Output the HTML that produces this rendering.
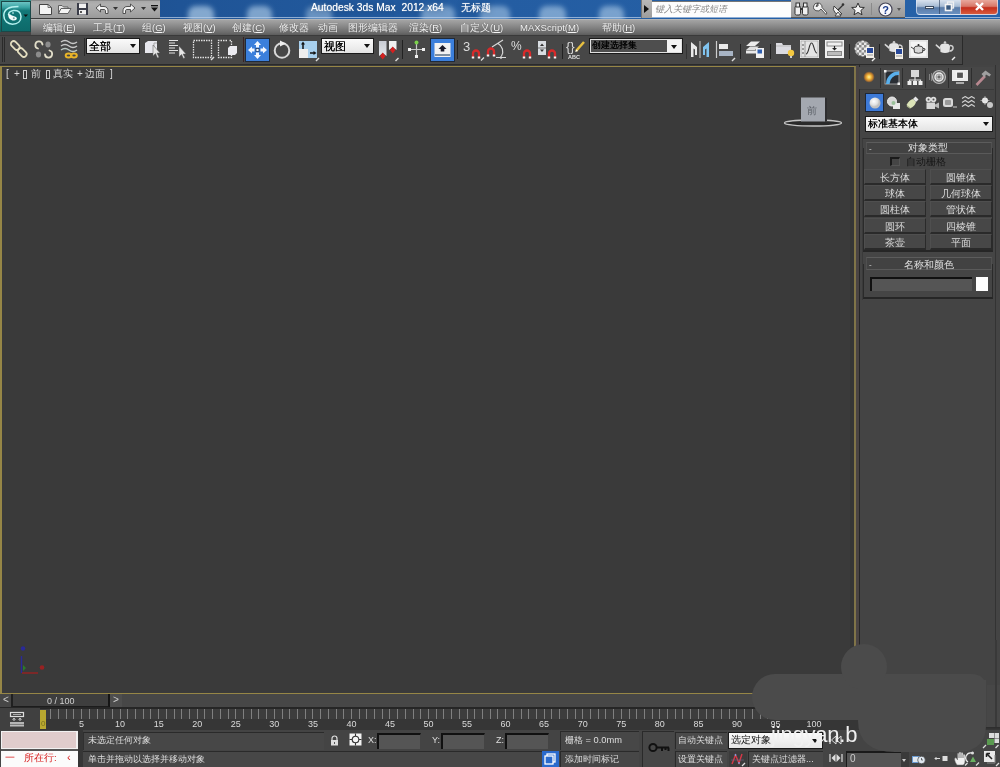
<!DOCTYPE html>
<html><head><meta charset="utf-8">
<style>
*{margin:0;padding:0;box-sizing:border-box}
html,body{width:1000px;height:767px;overflow:hidden;background:#444;font-family:"Liberation Sans",sans-serif;position:relative}
body{will-change:transform}
.a{position:absolute}
.t{position:absolute;white-space:nowrap;line-height:1}
#title{left:0;top:0;width:1000px;height:19px;overflow:hidden;background:linear-gradient(90deg,#1c4a86 0,#1f5496 18%,#245da2 50%,#2662a8 100%);}
.spot{position:absolute;top:6px;height:16px;background:rgba(200,225,245,.8);border-radius:8px 8px 2px 2px;filter:blur(2.5px)}
#qat{left:31px;top:0;width:129px;height:19px;background:linear-gradient(#a8a8a8,#b0b0b0 20%,#a4a4a4 70%,#9a9a9a);border-bottom:1.5px solid #3e3e3e;border-top:1px solid #8a8a8a}
#logo{left:0;top:0;width:31px;height:32px;background:linear-gradient(#3a9a94,#1a7672 60%,#0f6260);}
#menu{left:31px;top:19px;width:969px;height:16px;background:linear-gradient(#a4a4a4,#8a8a8a 40%,#6a6a6a 85%,#5c5c5c);border-top:1px solid #b4b4b4}
.mi{position:absolute;top:2px;font-size:9.5px;color:#f4f4f4;white-space:nowrap;line-height:11px;text-shadow:0 0 1px rgba(40,40,40,.6)}
.mi u{text-decoration-thickness:1px;text-underline-offset:1px}
#tb{left:0;top:35px;width:1000px;height:30px;background:#434343;}
#tbin{left:0;top:35px;width:963px;height:30px;background:#474747;border-top:1px solid #3a3a3a;border-right:1px solid #2a2a2a;border-bottom:1px solid #2a2a2a}
#vp{left:0;top:65px;width:857px;height:629px;background:#3a3a3a;}
#vpb{left:0;top:66px;width:856px;height:628px;border-left:2px solid #968646;border-top:1px solid #968646;border-right:2px solid #807448;border-bottom:1px solid #968646;}
#cp{left:857px;top:65px;width:143px;height:629px;background:#444;}
#ts{left:0;top:694px;width:1000px;height:14px;background:#4a4a4a;}
#trk{left:0;top:708px;width:1000px;height:22px;background:#444;}
#sb{left:0;top:730px;width:1000px;height:37px;background:#444;}
.dd{background:#1a1a1a;}
.dd:before{content:"";position:absolute;left:1px;top:1px;right:1px;bottom:1px;background:linear-gradient(#fafafa,#e4e4e4)}
.ddt{position:absolute;left:3px;top:2px;font-size:10.5px;color:#000;line-height:12px;white-space:nowrap;text-shadow:.3px 0 0 #000}
.arr{display:block;width:0;height:0;border-left:3.5px solid transparent;border-right:3.5px solid transparent;border-top:4px solid #111}
.dd .arr{position:absolute;right:4px;top:6px}
.vl{font-size:10px;color:#d8d8d8}
.sep{width:1px;height:20px;background:#2e2e2e}
.rl{font-size:9.5px;color:#e0e0e0}
.btn{background:#474747;border-top:1px solid #4f4f4f;border-left:1px solid #4f4f4f;border-right:1px solid #2a2a2a;border-bottom:2px solid #2a2a2a}
.btn span{position:absolute;left:0;right:0;top:2px;text-align:center;font-size:9.5px;color:#dcdcdc;line-height:11px}
.tk{top:709px;width:1px;height:10px;background:#808080}
.tl{top:720px;font-size:9px;color:#dadada}
.sbt{font-size:9.3px;color:#dedede}
.fld{background:#555;border-top:2px solid #111;border-left:2px solid #111;border-right:1px solid #444}
.kb{background:#4a4a4a;border-top:1px solid #2a2a2a;border-left:1px solid #2a2a2a}
</style></head><body>
<div id="title" class="a"><div class="spot" style="left:188px;width:26px;opacity:0.75"></div><div class="spot" style="left:247px;width:25px;opacity:0.7"></div><div class="spot" style="left:306px;width:26px;opacity:0.55"></div><div class="spot" style="left:421px;width:34px;opacity:0.6"></div><div class="spot" style="left:480px;width:30px;opacity:0.6"></div><div class="spot" style="left:539px;width:27px;opacity:0.65"></div><div class="spot" style="left:599px;width:25px;opacity:0.65"></div><div class="a" style="left:0;top:17px;width:1000px;height:1px;background:rgba(190,210,235,.7)"></div></div>
<div class="t" style="left:311px;top:3px;font-size:10.3px;color:#fff;text-shadow:0 0 1px rgba(255,255,255,.7),0 0 5px rgba(20,40,70,.5)">Autodesk 3ds Max&nbsp; 2012 x64</div>
<div class="t" style="left:461px;top:3px;font-size:10px;color:#fff;text-shadow:0 0 1px rgba(255,255,255,.7),0 0 5px rgba(20,40,70,.5)">无标题</div>
<div id="qat" class="a"></div>
<!-- search & info center -->
<div class="a" style="left:641px;top:0;width:11px;height:18px;background:linear-gradient(#b8b8b8,#9c9c9c);border-left:1px solid #777"></div>
<svg class="a" style="left:644px;top:5px" width="5" height="8"><path d="M0 0 L5 4 L0 8Z" fill="#111"/></svg>
<div class="a" style="left:652px;top:1px;width:139px;height:16px;background:#fdfdfd;border-top:1px solid #777"></div>
<div class="t" style="left:655px;top:5px;font-size:9px;color:#8a8a8a;font-style:italic">键入关键字或短语</div>
<div class="a" style="left:791px;top:0;width:114px;height:18px;background:linear-gradient(#b4b4b4,#a4a4a4 60%,#9a9a9a);border-bottom:1px solid #555"></div>
<svg class="a" style="left:794px;top:2px" width="15" height="14"><g fill="#f0f0f0" stroke="#333" stroke-width="1"><rect x="1" y="4" width="5.5" height="9" rx="1.5"/><rect x="8.5" y="4" width="5.5" height="9" rx="1.5"/><rect x="2" y="1" width="3.5" height="4"/><rect x="9.5" y="1" width="3.5" height="4"/></g><rect x="6" y="6" width="3" height="2" fill="#333"/></svg>
<svg class="a" style="left:813px;top:2px" width="15" height="15"><path d="M5 1 A4 4 0 1 0 8 7 L13 12.5 L14 11 L9 5.5 A4 4 0 0 0 5 1 L5 4 L3 4.5 Z" fill="#f4f4f4" stroke="#444" stroke-width=".9"/></svg>
<svg class="a" style="left:832px;top:2px" width="14" height="15"><path d="M2 4 A6 6 0 0 0 10 12 Z" fill="#f0f0f0" stroke="#333" stroke-width=".9"/><path d="M6 8 L11 3" stroke="#333" stroke-width="1.2"/><circle cx="11" cy="2.5" r="1.3" fill="#333"/><path d="M3 14 L6 10 L9 14Z" fill="#f0f0f0" stroke="#333" stroke-width=".8"/></svg>
<svg class="a" style="left:851px;top:2px" width="14" height="14"><path d="M7 1 L8.8 5.2 L13.3 5.5 L9.9 8.4 L11 12.8 L7 10.4 L3 12.8 L4.1 8.4 L0.7 5.5 L5.2 5.2Z" fill="#f4f4f4" stroke="#333" stroke-width="1"/></svg>
<div class="a" style="left:871px;top:3px;width:1px;height:12px;background:#8a8a8a"></div>
<svg class="a" style="left:878px;top:2px" width="15" height="15"><circle cx="7.5" cy="7.5" r="6.5" fill="#f8f8fc" stroke="#445" stroke-width="1.2"/><text x="4.2" y="11.8" font-size="11" font-weight="bold" fill="#1a3a8a" font-family="Liberation Sans">?</text></svg>
<svg class="a" style="left:897px;top:8px" width="4" height="3"><path d="M0 0 H4 L2 3Z" fill="#555"/></svg>
<!-- window buttons -->
<div class="a" style="left:916px;top:0;width:82px;height:15px;border:1px solid rgba(220,230,245,.7);border-top:0;border-radius:0 0 4px 4px;background:linear-gradient(#d8e2ee,#a8bcd4 45%,#5a7ca8 55%,#6a90c0)"></div>
<div class="a" style="left:960px;top:0;width:38px;height:15px;border:1px solid rgba(220,230,245,.7);border-top:0;border-radius:0 0 4px 0;background:linear-gradient(#e8a89c,#d87868 45%,#c42e1c 55%,#d85a3c)"></div>
<div class="a" style="left:939px;top:0;width:1px;height:14px;background:rgba(40,60,90,.6)"></div>
<div class="a" style="left:925px;top:6px;width:9px;height:3px;background:#f4f4f4;border:1px solid #3a4a60"></div>
<svg class="a" style="left:944px;top:1px" width="11" height="11"><rect x="3.5" y="1" width="6" height="6" fill="none" stroke="#f0f0f0" stroke-width="1.3"/><rect x="1.5" y="3.5" width="6" height="6" fill="#3a5a80" stroke="#f4f4f4" stroke-width="1.6"/></svg>
<svg class="a" style="left:974px;top:1px" width="11" height="11"><path d="M2 2 L9 9 M9 2 L2 9" stroke="#fff" stroke-width="2.4"/></svg>

<div id="logo" class="a"></div>
<div class="a" style="left:1px;top:1px;width:30px;height:31px;background:linear-gradient(#6cc4c4 0,#3aa4a4 18%,#127878 30%,#0d6a6a 100%);border:1px solid #1a4848"></div>
<svg class="a" style="left:2px;top:4px" width="28" height="24"><path d="M16.5 2.5 C9 2.5 1.8 4.5 1.8 11.5 C1.8 17 6 20.2 10.5 20.2 C16 20.2 19 17 19 12.5 C19 8 15.5 6 11.5 6.5 C8 7 6.5 9 6.5 11" fill="none" stroke="#b4f0ee" stroke-width="1.5"/><path d="M6.2 10 C5.8 14.5 9 16.8 12.2 16.5 C15 16.2 15.8 14 13.5 12.8 C11.5 11.8 9.5 12 8.5 10.5Z" fill="#f4fafa"/><circle cx="11.8" cy="14.2" r="1" fill="#7aa8a8"/><circle cx="11" cy="9" r="1.1" fill="#8ccaca"/><path d="M21.5 10.5 H26 L23.75 13Z" fill="#111"/></svg>
<!-- QAT icons -->
<svg class="a" style="left:38px;top:3px" width="15" height="13"><path d="M1.5 1.5 H10 L13.5 4.5 V11.5 H1.5Z" fill="#f4f4f4" stroke="#444" stroke-width="1"/><path d="M10 1.5 V4.5 H13.5" fill="none" stroke="#555" stroke-width=".8"/></svg>
<svg class="a" style="left:57px;top:3px" width="15" height="12"><path d="M1.5 2.5 H5 L6.5 4 H11 V6 H4 L1.5 10.5Z" fill="#e8e8e8" stroke="#555" stroke-width=".9"/><path d="M1.5 10.5 L4 5.5 H14 L11 10.5Z" fill="#f4f4f4" stroke="#555" stroke-width=".9"/></svg>
<svg class="a" style="left:76px;top:2px" width="13" height="14"><rect x="1" y="1" width="11" height="12" fill="#3a3c48"/><rect x="3" y="1.5" width="7" height="4.5" fill="#f0f0f0"/><rect x="3" y="8" width="7" height="4.5" fill="#f0f0f0"/><rect x="4" y="9" width="2" height="2" fill="#555"/></svg>
<svg class="a" style="left:95px;top:3px" width="14" height="12"><path d="M1 5 L5.5 1 V3.5 H9 C12 3.5 13 6 13 8 V10.5 H10.5 V8 C10.5 7 10 6.5 9 6.5 H5.5 V9Z" fill="#f4f4f4" stroke="#444" stroke-width=".9"/></svg>
<svg class="a" style="left:113px;top:7px" width="5" height="3"><path d="M0 0 H5 L2.5 3Z" fill="#333"/></svg>
<svg class="a" style="left:122px;top:3px" width="14" height="12"><path d="M13 5 L8.5 1 V3.5 H5 C2 3.5 1 6 1 8 V10.5 H3.5 V8 C3.5 7 4 6.5 5 6.5 H8.5 V9Z" fill="#f4f4f4" stroke="#444" stroke-width=".9"/></svg>
<svg class="a" style="left:141px;top:7px" width="5" height="3"><path d="M0 0 H5 L2.5 3Z" fill="#333"/></svg>
<svg class="a" style="left:151px;top:5px" width="7" height="7"><rect x="0" y="0" width="7" height="1.3" fill="#111"/><path d="M0 2.5 H7 L3.5 6.5Z" fill="#111"/></svg>

<div id="menu" class="a">
<span class="mi" style="left:12px">编辑(<u>E</u>)</span>
<span class="mi" style="left:62px">工具(<u>T</u>)</span>
<span class="mi" style="left:111px">组(<u>G</u>)</span>
<span class="mi" style="left:152px">视图(<u>V</u>)</span>
<span class="mi" style="left:201px">创建(<u>C</u>)</span>
<span class="mi" style="left:248px">修改器</span>
<span class="mi" style="left:287px">动画</span>
<span class="mi" style="left:317px">图形编辑器</span>
<span class="mi" style="left:378px">渲染(<u>R</u>)</span>
<span class="mi" style="left:429px">自定义(<u>U</u>)</span>
<span class="mi" style="left:489px">MAXScript(<u>M</u>)</span>
<span class="mi" style="left:571px">帮助(<u>H</u>)</span>
</div>
<div id="tb" class="a"></div>
<div id="tbin" class="a"></div>

<!-- TOOLBAR -->
<div class="a" style="left:2px;top:37px;width:1px;height:25px;background:#2a2a2a"></div>
<div class="a" style="left:4px;top:37px;width:1px;height:25px;background:#2a2a2a"></div>
<svg class="a" style="left:9px;top:39px" width="20" height="21"><g fill="none" stroke="#e4dec0" stroke-width="1.8"><rect x="3.5" y="1.5" width="5.5" height="10" rx="2.75" transform="rotate(-45 6.25 6.5)"/><rect x="10.5" y="8.5" width="5.5" height="10" rx="2.75" transform="rotate(-45 13.25 13.5)"/></g></svg>
<svg class="a" style="left:32px;top:38px" width="24" height="22"><ellipse cx="16" cy="6.5" rx="2.6" ry="3" fill="#8c8c8c"/><ellipse cx="6.5" cy="16.5" rx="2.6" ry="3" fill="#8c8c8c"/><g fill="none" stroke="#e0dcc8" stroke-width="1.8" stroke-linecap="round"><path d="M6 10.5 A3.6 3.6 0 1 1 10.5 6.5"/><path d="M13 16.5 A3.6 3.6 0 1 0 17.5 12.5"/></g></svg>
<svg class="a" style="left:59px;top:39px" width="22" height="21"><g fill="none" stroke="#c8c8c8" stroke-width="1.5"><path d="M2 3 Q6 0 10 3 Q14 6 18 3"/><path d="M2 7 Q6 4 10 7 Q14 10 18 7"/><path d="M2 11 Q6 8 10 11 Q14 14 18 11" stroke="#bcc8c4"/></g><g fill="none" stroke="#e8b428" stroke-width="2"><ellipse cx="9.5" cy="16.5" rx="2.8" ry="2"/><ellipse cx="15" cy="16.5" rx="2.8" ry="2"/></g></svg>
<div class="a" style="left:84px;top:38px;width:1px;height:18px;background:#2a2a2a"></div>
<div class="a dd" style="left:86px;top:38px;width:54px;height:16px"><span class="ddt">全部</span><i class="arr"></i></div>
<svg class="a" style="left:144px;top:40px" width="18" height="19"><path d="M1 3 L4 1 H13 V11 L10 13 H1Z" fill="#e8e8ee"/><path d="M10 3 H13 M10 3 V13" stroke="#aaa" fill="none"/><path d="M9 5 V16 L11.5 13.5 L13.5 18 L15 17.3 L13 13 H16Z" fill="#e6e6e6" stroke="#555" stroke-width=".5"/></svg>
<svg class="a" style="left:167px;top:39px" width="21" height="20"><g stroke="#e4e4e4" stroke-width="1.1"><path d="M2 1.5 H11 M2 4 H8 M2 6.5 H11 M2 9 H8 M2 11.5 H11 M2 14 H8"/></g><path d="M12 7 V18 L14.5 15.5 L16.5 19.5 L18 18.8 L16 15 H19Z" fill="#e6e6e6" stroke="#555" stroke-width=".5"/></svg>
<svg class="a" style="left:192px;top:39px" width="23" height="22"><rect x="1.5" y="1.5" width="18" height="17" fill="none" stroke="#e0e0e0" stroke-width="1.3" stroke-dasharray="1.5 1"/><path d="M19 21 L22 18" stroke="#ddd" stroke-width="1.5"/></svg>
<svg class="a" style="left:217px;top:39px" width="21" height="21"><path d="M10 1.5 H1.5 V18.5 H14.5 V14 M14.5 6 V1.5 H12" fill="none" stroke="#e0e0e0" stroke-width="1.3" stroke-dasharray="1.5 1"/><path d="M11 9 L13 7 H20 V14 L18 16 H11Z" fill="#eaeaf0"/></svg>
<div class="a" style="left:243px;top:37px;width:1px;height:25px;background:#3a2222"></div>
<div class="a" style="left:245px;top:38px;width:25px;height:24px;background:#1f2a3a"></div>
<svg class="a" style="left:246px;top:39px" width="23" height="22"><rect width="23" height="22" fill="#3b7fdc"/><g fill="#f4f8ff"><path d="M11.5 2 L15 6 H13 V8.5 H10 V6 H8Z"/><path d="M11.5 20 L15 16 H13 V13.5 H10 V16 H8Z"/><path d="M2 11 L6 7.5 V9.5 H8.5 V12.5 H6 V14.5Z"/><path d="M21 11 L17 7.5 V9.5 H14.5 V12.5 H17 V14.5Z"/></g><rect x="10" y="9.5" width="3" height="3" fill="#f4f8ff" stroke="#1a3a6a" stroke-width=".8"/></svg>
<svg class="a" style="left:272px;top:40px" width="21" height="20"><circle cx="10" cy="10.5" r="7.3" fill="none" stroke="#d8d8d8" stroke-width="2"/><path d="M8 0.5 L14 3.5 L8 6.5Z" fill="#f0f0f0"/></svg>
<svg class="a" style="left:298px;top:40px" width="22" height="22"><rect x="1" y="1" width="18" height="17" fill="#a8d0ee"/><rect x="1" y="9" width="9" height="9" fill="#eeeeee"/><path d="M5 9 V3" stroke="#111" stroke-width="1.5"/><path d="M3 4.5 L5 1.5 L7 4.5Z" fill="#111"/><path d="M12 13 H17" stroke="#111" stroke-width="1.5"/><path d="M15.5 11 L18.5 13 L15.5 15Z" fill="#111"/><path d="M18 21 L21 18" stroke="#ddd" stroke-width="1.5"/></svg>
<div class="a dd" style="left:321px;top:38px;width:53px;height:16px"><span class="ddt">视图</span><i class="arr"></i></div>
<svg class="a" style="left:378px;top:40px" width="22" height="22"><defs><linearGradient id="pg1" x1="0" x2="0" y1="0" y2="1"><stop offset="0" stop-color="#c8ccd4"/><stop offset="1" stop-color="#e4e8ec"/></linearGradient></defs><path d="M1 1 H8.5 V16 L4.75 13 L1 16Z" fill="url(#pg1)"/><path d="M4.75 12.5 L7.5 16 L4.75 19.5 L2 16Z" fill="#d42020"/><path d="M11 1 H18.5 V10 L14.75 7 L11 10Z" fill="#f0f0f0"/><path d="M14.75 6.5 L17.5 10 L14.75 13.5 L12 10Z" fill="#d42020"/><path d="M17.5 21 L20.5 18" stroke="#ddd" stroke-width="1.5"/></svg>
<div class="a" style="left:402px;top:40px;width:1px;height:19px;background:#222"></div>
<svg class="a" style="left:407px;top:40px" width="19" height="19"><path d="M9.5 3 V16 M2 9.5 H17" stroke="#c8c8c8" stroke-width="1.2"/><circle cx="9.5" cy="2.5" r="2" fill="#7ad04a"/><rect x="1" y="8" width="3" height="3" fill="#f0f0f0"/><rect x="15" y="8" width="3" height="3" fill="#f0f0f0"/><rect x="8" y="15" width="3" height="3" fill="#f0f0f0"/></svg>
<div class="a" style="left:430px;top:38px;width:25px;height:24px;background:#1f2a3a"></div>
<svg class="a" style="left:431px;top:39px" width="23" height="22"><rect width="23" height="22" fill="#3b7fdc"/><rect x="3.5" y="4" width="16" height="14" fill="#f2f2f2"/><rect x="4" y="15" width="15" height="2" fill="#8090a0"/><path d="M11.5 6 L15.5 10 H13.3 V12.5 H9.7 V10 H7.5Z" fill="#1a1a2a"/></svg>
<div class="a" style="left:457px;top:40px;width:1px;height:19px;background:#222"></div>
<div class="t" style="left:463px;top:40px;font-size:13px;color:#dcdcdc">3</div>
<svg class="a mg" style="left:471px;top:47px" width="14" height="14"><path d="M2 11 V6.5 a3 3 0 0 1 6 0 V11" fill="none" stroke="#d82a2a" stroke-width="2.3"/><path d="M0.8 9.5 H3.2 V11.5 H0.8Z M6.8 9.5 H9.2 V11.5 H6.8Z" fill="#f4f4f4"/><path d="M10 13.5 L13 10.5" stroke="#ddd" stroke-width="1.3"/></svg>
<svg class="a" style="left:486px;top:39px" width="22" height="21"><path d="M2 17 V12.5 a3 3 0 0 1 6 0 V17" fill="none" stroke="#d82a2a" stroke-width="2.3"/><path d="M0.8 15.5 H3.2 V17.5 H0.8Z M6.8 15.5 H9.2 V17.5 H6.8Z" fill="#f4f4f4"/><path d="M6 8 L17 1 M12 4.5 a9 9 0 0 1 3.5 12.5 M10 18.5 H20 M15 17 V20" fill="none" stroke="#d8d8d8" stroke-width="1.2"/></svg>
<div class="t" style="left:511px;top:40px;font-size:12px;color:#dcdcdc">%</div>
<svg class="a" style="left:522px;top:47px" width="11" height="13"><path d="M2 11 V6.5 a3 3 0 0 1 6 0 V11" fill="none" stroke="#d82a2a" stroke-width="2.3"/><path d="M0.8 9.5 H3.2 V11.5 H0.8Z M6.8 9.5 H9.2 V11.5 H6.8Z" fill="#f4f4f4"/></svg>
<svg class="a" style="left:537px;top:40px" width="20" height="20"><rect x="1" y="1" width="8" height="14" fill="#d8dde2"/><path d="M3 6 L5 3.5 L7 6Z M3 9.5 L5 12 L7 9.5Z" fill="#333"/><path d="M1 8 H9" stroke="#777"/><path d="M12 18 V13.5 a3 3 0 0 1 6 0 V18" fill="none" stroke="#d82a2a" stroke-width="2.3"/><path d="M10.8 16.5 H13.2 V18.5 H10.8Z M16.8 16.5 H19.2 V18.5 H16.8Z" fill="#f4f4f4"/></svg>
<div class="a" style="left:562px;top:44px;width:1px;height:15px;background:#222"></div>
<svg class="a" style="left:566px;top:39px" width="22" height="21"><text x="0" y="12" font-size="13" fill="#d8d8d8" font-family="Liberation Sans">{}</text><path d="M10 12 L18 3" stroke="#e8c040" stroke-width="2.5"/><path d="M9 13 L10.5 10.5 L12 12Z" fill="#fff"/><text x="2" y="19.5" font-size="5.5" font-weight="bold" fill="#e0e0e0" font-family="Liberation Sans">ABC</text></svg>
<div class="a" style="left:589px;top:38px;width:94px;height:16px;background:#1a1a1a"></div>
<div class="a" style="left:590px;top:39px;width:92px;height:14px;border:1px solid #e0e0e0;background:#4e4e4e"></div>
<div class="t" style="left:592px;top:41px;font-size:9.3px;color:#000;text-shadow:.4px 0 0 #000">创建选择集</div>
<div class="a" style="left:667px;top:40px;width:14px;height:12px;background:#f4f4f4"></div>
<i class="arr a" style="left:671px;top:45px"></i>
<div class="a" style="left:686px;top:44px;width:1px;height:15px;background:#333"></div>
<svg class="a" style="left:690px;top:40px" width="20" height="19"><path d="M1 2 L7 7 V15 H5 V9.5 L3.5 8.5 V17 H1Z" fill="#eaeaea"/><path d="M10 1 V18" stroke="#c8c8c8" stroke-width="1"/><path d="M19 2 L13 7 V15 H15 V9.5 L16.5 8.5 V17 H19Z" fill="#80c4f0"/></svg>
<svg class="a" style="left:715px;top:40px" width="22" height="22"><path d="M1.5 1 V18" stroke="#ccc" stroke-width="1.2"/><rect x="4" y="4" width="9" height="5" fill="#eaeaea"/><rect x="4" y="11" width="14" height="5" fill="#a8b4c4"/><path d="M17 21 L20 18" stroke="#ddd" stroke-width="1.5"/></svg>
<div class="a" style="left:740px;top:44px;width:1px;height:15px;background:#222"></div>
<svg class="a" style="left:745px;top:40px" width="20" height="19"><path d="M1 6 L6 1.5 H15 L10 6Z" fill="#ececec"/><path d="M1 10 L5 6.5 H14 L10 10Z" fill="#e0e0e0"/><path d="M1 13.5 H11 V10.5 H1Z" fill="#e8e8e8"/><rect x="11" y="8" width="8" height="10" fill="#f0f0f0"/><rect x="12.5" y="9.5" width="4.5" height="4" fill="#2f5fb0"/></svg>
<div class="a" style="left:770px;top:44px;width:1px;height:15px;background:#222"></div>
<svg class="a" style="left:775px;top:40px" width="21" height="19"><path d="M1 3 H7 L8 5 H16 V14 H1Z" fill="#dcdce2"/><path d="M1 6 H16" stroke="#bbb"/><circle cx="16" cy="13" r="3.2" fill="#f4c840"/><rect x="15" y="16" width="2" height="2" fill="#ccc"/></svg>
<svg class="a" style="left:800px;top:40px" width="19" height="18"><rect x="0" y="0" width="19" height="18" fill="#f0f0f0"/><rect x="1" y="1" width="17" height="16" fill="#e4e4e4" stroke="#999" stroke-width=".6"/><path d="M5 1 V17" stroke="#888" stroke-width=".8"/><path d="M2 5 H4 M2 9 H4 M2 13 H4" stroke="#555"/><path d="M6 14 C9 14 9 3 11.5 3 C14 3 14 13 17 13" fill="none" stroke="#333" stroke-width="1.1"/></svg>
<svg class="a" style="left:825px;top:40px" width="19" height="18"><rect x="0" y="0" width="19" height="18" fill="#f0f0f0"/><rect x="2" y="2" width="15" height="4" fill="none" stroke="#888"/><rect x="2" y="11" width="15" height="5" fill="#888"/><rect x="3" y="12" width="13" height="3" fill="#bbb"/><path d="M9.5 6 V9" stroke="#222" stroke-width="1.2"/><path d="M7 8 L9.5 10.5 L12 8Z" fill="#222"/></svg>
<div class="a" style="left:849px;top:44px;width:1px;height:15px;background:#222"></div>
<svg class="a" style="left:854px;top:40px" width="22" height="22"><defs><pattern id="chk" width="5" height="5" patternUnits="userSpaceOnUse"><rect width="5" height="5" fill="#e8e8e8"/><rect width="2.5" height="2.5" fill="#8a8a8a"/><rect x="2.5" y="2.5" width="2.5" height="2.5" fill="#8a8a8a"/></pattern></defs><circle cx="8.5" cy="8.5" r="8" fill="url(#chk)"/><rect x="12" y="7" width="8" height="11" fill="#f4f0e8"/><rect x="13" y="8" width="6" height="5" fill="#2a4a9a"/><path d="M13 15 H19" stroke="#999"/><path d="M18 21 L21 18" stroke="#eee" stroke-width="1.5"/></svg>
<div class="a" style="left:879px;top:44px;width:1px;height:15px;background:#222"></div>
<svg class="a" style="left:883px;top:40px" width="21" height="20"><path d="M6 6 Q6 3 11 3 Q16 3 16 6 L15.5 11 Q11 13 6.5 11Z" fill="#e4e4e4"/><path d="M6.5 7 L2 3.5 L1.5 5 L6 9" fill="#d8d8d8"/><path d="M16 5 Q19.5 5 19 8 Q18.5 10.5 15.5 10.5" fill="none" stroke="#d0d0d0" stroke-width="1.5"/><circle cx="11" cy="2.2" r="1.3" fill="#ccc"/><rect x="12" y="8" width="8" height="11" fill="#f4f0e8"/><rect x="13" y="9" width="6" height="5" fill="#2a4a9a"/><path d="M13 16 H19" stroke="#999"/></svg>
<svg class="a" style="left:909px;top:40px" width="19" height="18"><rect width="19" height="18" fill="#ececec"/><rect x="1" y="1" width="17" height="16" fill="#f4f4f4" stroke="#c8c8c8" stroke-width=".6"/><path d="M5 8 Q5 6 9.5 6 Q14 6 14 8 L13.5 12.5 Q9.5 14 5.5 12.5Z" fill="#d8d8d8" stroke="#333" stroke-width=".9"/><path d="M5 9 L2 7 M14 8.5 Q16.5 8 16 10 L13.5 11" fill="none" stroke="#333" stroke-width=".9"/><circle cx="9.5" cy="5" r="1" fill="#222"/></svg>
<svg class="a" style="left:934px;top:40px" width="22" height="21"><path d="M6 6.5 Q6 3.5 11 3.5 Q16 3.5 16 6.5 L15.5 12 Q11 14 6.5 12Z" fill="#e4e4e4"/><path d="M6.5 7.5 L2 4 L1.5 5.5 L6 9.5" fill="#d8d8d8"/><path d="M16 5.5 Q19.5 5.5 19 8.5 Q18.5 11 15.5 11" fill="none" stroke="#d0d0d0" stroke-width="1.5"/><circle cx="11" cy="2.5" r="1.3" fill="#ccc"/><path d="M18 20 L21 17" stroke="#eee" stroke-width="1.5"/></svg>
<div id="vp" class="a"></div>
<div id="vpb" class="a"></div>
<!-- VIEWPORT CONTENT -->
<div class="t vl" style="left:6px;top:69px">[</div>
<div class="t vl" style="left:14px;top:69px">+</div>
<div class="a" style="left:23px;top:70px;width:4px;height:9px;border:1px solid #d0d0d0"></div>
<div class="t vl" style="left:31px;top:69px;font-size:10px">前</div>
<div class="a" style="left:46px;top:70px;width:4px;height:9px;border:1px solid #d0d0d0"></div>
<div class="t vl" style="left:53px;top:69px;font-size:10px">真实</div>
<div class="t vl" style="left:77px;top:69px">+</div>
<div class="t vl" style="left:85px;top:69px;font-size:10px">边面</div>
<div class="t vl" style="left:110px;top:69px">]</div>
<!-- viewcube -->
<svg class="a" style="left:782px;top:95px" width="64" height="34"><ellipse cx="31" cy="28" rx="28.5" ry="3" fill="#2a2a2a" stroke="#c4c4c4" stroke-width="1.4"/><rect x="19" y="2.5" width="24" height="24" fill="#a4a8b0"/><rect x="43" y="3" width="2" height="23" fill="#2e2e30"/><text x="25" y="19" font-size="10" fill="#5a5e66" font-family="Liberation Sans">前</text></svg>
<!-- axis tripod -->
<svg class="a" style="left:16px;top:643px" width="32" height="34"><path d="M5.5 13 V30" stroke="#2a2a98" stroke-width="1.4"/><circle cx="7" cy="5.5" r="2.2" fill="#2a2a98"/><path d="M6 30 H22" stroke="#982222" stroke-width="1.4"/><circle cx="26" cy="24.5" r="2.3" fill="#982222"/><path d="M7 22 L10 25 L7 28Z" fill="#2a7a2a"/></svg>
<!-- COMMAND PANEL -->
<div class="a" style="left:856px;top:65px;width:144px;height:629px;background:#444"></div>
<div class="a" style="left:856px;top:66px;width:3px;height:628px;background:#4a4444"></div>
<div class="a" style="left:859px;top:65px;width:1px;height:629px;background:#262626"></div>
<div class="a" style="left:850px;top:67px;width:4px;height:626px;background:#363636"></div>
<div class="a" style="left:995px;top:65px;width:1px;height:629px;background:#333"></div>
<div class="a" style="left:859px;top:67px;width:135px;height:22px;background:#474747"></div>
<div class="a sep" style="left:880px;top:68px"></div>
<div class="a sep" style="left:902px;top:68px"></div>
<div class="a sep" style="left:925px;top:68px"></div>
<div class="a sep" style="left:948px;top:68px"></div>
<div class="a sep" style="left:971px;top:68px"></div>
<svg class="a" style="left:862px;top:70px" width="15" height="15"><defs><radialGradient id="sun"><stop offset="0" stop-color="#fff0a0"/><stop offset=".35" stop-color="#f8c040"/><stop offset=".7" stop-color="#d88828" stop-opacity=".8"/><stop offset="1" stop-color="#c07020" stop-opacity="0"/></radialGradient></defs><circle cx="7" cy="7" r="5.8" fill="url(#sun)"/></svg>
<svg class="a" style="left:883px;top:69px" width="18" height="17"><rect x="2" y="2" width="14" height="13" fill="#2a2e34" stroke="#b8b8b8" stroke-width=".8"/><path d="M3 15 A12.5 12.5 0 0 1 16 2.5 V6 A9 9 0 0 0 6.5 15Z" fill="#5ab0ec"/><rect x="1" y="1" width="2.5" height="2.5" fill="#eee"/><rect x="14.5" y="13.5" width="2.5" height="2.5" fill="#eee"/></svg>
<svg class="a" style="left:906px;top:69px" width="18" height="17"><rect x="5" y="1" width="8" height="7" fill="#d8d8d8"/><path d="M9 8 V11 M3.5 14 V11 H14.5 V14 M9 11 V14" fill="none" stroke="#ddd" stroke-width="1.2"/><rect x="1.5" y="12" width="4" height="4" fill="#eee"/><rect x="7" y="12" width="4" height="4" fill="#eee"/><rect x="12.5" y="12" width="4" height="4" fill="#eee"/></svg>
<svg class="a" style="left:928px;top:69px" width="19" height="16"><circle cx="11" cy="8" r="6.5" fill="#6a6a6a" stroke="#b8b8b8" stroke-width="1.2"/><circle cx="11" cy="8" r="4" fill="none" stroke="#f0f0f0" stroke-width="1.4"/><rect x="9" y="6" width="4" height="4" fill="none" stroke="#eee" stroke-width=".9"/><path d="M1.5 5 V11 M3.5 4 V12" stroke="#8a8a8a" stroke-width=".9"/></svg>
<svg class="a" style="left:951px;top:69px" width="18" height="16"><rect x="1" y="1" width="16" height="11" fill="#ececec"/><rect x="5.5" y="3" width="7" height="6.5" fill="#555" stroke="#f4f4f4" stroke-width="1.2"/><path d="M5 14 H13" stroke="#ccc" stroke-width="1.5"/></svg>
<svg class="a" style="left:974px;top:69px" width="18" height="18"><path d="M2.5 16 L11 7" stroke="#b88890" stroke-width="2.6"/><path d="M7.5 5 L11.5 1.5 L17 5.5 L15.5 7.5 L12 5.5 L10.5 8.5Z" fill="#a0a0a0"/></svg>
<div class="a" style="left:860px;top:89px;width:134px;height:1px;background:#3a3a3a"></div>
<!-- sub tabs -->
<div class="a" style="left:865px;top:93px;width:19px;height:19px;background:#1e2838"></div>
<div class="a" style="left:866px;top:94px;width:17px;height:17px;background:#3d7ad8"></div>
<svg class="a" style="left:869px;top:97px" width="12" height="12"><defs><radialGradient id="sph" cx=".4" cy=".35"><stop offset="0" stop-color="#fff"/><stop offset=".7" stop-color="#e0e0e0"/><stop offset="1" stop-color="#c0c0c0"/></radialGradient></defs><circle cx="6" cy="6" r="5.5" fill="url(#sph)"/></svg>
<svg class="a" style="left:886px;top:96px" width="16" height="14"><circle cx="6" cy="5.5" r="4.5" fill="#d8d8d8" stroke="#eee" stroke-width="1"/><rect x="7" y="7" width="7" height="6" fill="#e8e8e8"/><circle cx="7.5" cy="7" r="2" fill="#9ac09a"/></svg>
<svg class="a" style="left:905px;top:95px" width="15" height="14"><path d="M1.5 10 Q4 5 8 4 L11 7 Q10 11 5 13.5Z" fill="#dce4b8"/><path d="M8 4 L10.5 1.5 L13.5 4.5 L11 7Z" fill="#e8e8e8"/><path d="M2 11 L5 13" stroke="#a8b088" stroke-width="1.2"/></svg>
<svg class="a" style="left:924px;top:96px" width="16" height="14"><circle cx="4.5" cy="3.5" r="2.8" fill="#ddd"/><circle cx="9.5" cy="3.5" r="2.8" fill="#ddd"/><circle cx="4.5" cy="3.5" r="1" fill="#555"/><circle cx="9.5" cy="3.5" r="1" fill="#555"/><rect x="2.5" y="6.5" width="8.5" height="6.5" fill="#d8d8d8"/><path d="M11 8.5 L15 6.5 V12.5 L11 10.5Z" fill="#bbb"/></svg>
<svg class="a" style="left:942px;top:97px" width="16" height="12"><rect x="1" y="1" width="10" height="9" rx="2.5" fill="#d8d8d8"/><rect x="3" y="3" width="6" height="5" rx="1" fill="#999"/><path d="M11 10 H15" stroke="#ccc"/></svg>
<svg class="a" style="left:961px;top:96px" width="15" height="13"><g fill="none" stroke="#d0d0d0" stroke-width="1.1"><path d="M1 2.5 l3.2 -2 l3.2 2 l3.2 -2 l3.2 2"/><path d="M1 6.5 l3.2 -2 l3.2 2 l3.2 -2 l3.2 2"/><path d="M1 10.5 l3.2 -2 l3.2 2 l3.2 -2 l3.2 2"/></g></svg>
<svg class="a" style="left:980px;top:96px" width="15" height="13"><circle cx="5" cy="4.5" r="3" fill="#e8e8e8"/><circle cx="10" cy="9" r="3" fill="#c8c8c8"/><path d="M5 0 V9 M0.5 4.5 H9.5" stroke="#ddd" stroke-width=".6"/></svg>
<!-- dropdown std primitives -->
<div class="a dd" style="left:865px;top:116px;width:128px;height:16px"><span class="ddt" style="font-size:10px">标准基本体</span><i class="arr"></i></div>
<!-- rollout 1 -->
<div class="a" style="left:862px;top:138px;width:133px;height:115px;background:#454545;border-top:1px solid #2e2e2e;border-left:1px solid #3a3a3a"></div>
<div class="a" style="left:863px;top:148px;width:130px;height:104px;border:1px solid #2a2a2a;border-bottom:2px solid #262626;border-top:0"></div>
<div class="a" style="left:866px;top:142px;width:126px;height:12px;background:#424242;border-top:1px solid #5c5c5c;border-bottom:1px solid #5a5a5a;border-left:1px solid #505050;border-right:1px solid #505050"></div>
<div class="t" style="left:869px;top:145px;font-size:8px;color:#ddd">-</div>
<div class="t rl" style="left:908px;top:143px">对象类型</div>
<div class="a" style="left:890px;top:157px;width:10px;height:9px;border-top:2px solid #1a1a1a;border-left:2px solid #1a1a1a;border-right:1px solid #555;border-bottom:1px solid #555;background:#454545"></div>
<div class="t rl" style="left:906px;top:157px;color:#161616">自动栅格</div>
<div class="a btn" style="left:864px;top:169px;width:62px;height:16px"><span>长方体</span></div>
<div class="a btn" style="left:930px;top:169px;width:62px;height:16px"><span>圆锥体</span></div>
<div class="a btn" style="left:864px;top:185px;width:62px;height:16px"><span>球体</span></div>
<div class="a btn" style="left:930px;top:185px;width:62px;height:16px"><span>几何球体</span></div>
<div class="a btn" style="left:864px;top:201px;width:62px;height:16px"><span>圆柱体</span></div>
<div class="a btn" style="left:930px;top:201px;width:62px;height:16px"><span>管状体</span></div>
<div class="a btn" style="left:864px;top:218px;width:62px;height:16px"><span>圆环</span></div>
<div class="a btn" style="left:930px;top:218px;width:62px;height:16px"><span>四棱锥</span></div>
<div class="a btn" style="left:864px;top:234px;width:62px;height:16px"><span>茶壶</span></div>
<div class="a btn" style="left:930px;top:234px;width:62px;height:16px"><span>平面</span></div>

<!-- rollout 2 -->
<div class="a" style="left:862px;top:253px;width:133px;height:47px;background:#454545;border-left:1px solid #3a3a3a"></div>
<div class="a" style="left:863px;top:264px;width:130px;height:35px;border:1px solid #2a2a2a;border-bottom:2px solid #262626;border-top:0"></div>
<div class="a" style="left:866px;top:257px;width:126px;height:13px;background:#424242;border-top:1px solid #5c5c5c;border-bottom:1px solid #5a5a5a;border-left:1px solid #505050;border-right:1px solid #505050"></div>
<div class="t" style="left:869px;top:261px;font-size:8px;color:#ddd">-</div>
<div class="t rl" style="left:904px;top:260px">名称和颜色</div>
<div class="a" style="left:870px;top:277px;width:102px;height:14px;background:#555;border-top:2px solid #111;border-left:2px solid #111"></div>
<div class="a" style="left:976px;top:277px;width:12px;height:14px;background:#fff"></div>


<!-- TIME SLIDER -->
<div class="a" style="left:0;top:694px;width:1000px;height:14px;background:#474747"></div>
<div class="a" style="left:0;top:694px;width:11px;height:13px;background:#464646"></div>
<div class="t" style="left:3px;top:695px;font-size:10px;color:#cfcfcf">&lt;</div>
<div class="a" style="left:11px;top:694px;width:99px;height:14px;background:#3e3e3e;border-left:2px solid #202020;border-right:2px solid #151515;border-bottom:2px solid #1c1c1c"></div>
<div class="t" style="left:47px;top:697px;font-size:9px;color:#d0d0d0">0 / 100</div>
<div class="a" style="left:110px;top:694px;width:12px;height:13px;background:#4e4e4e"></div>
<div class="t" style="left:113px;top:695px;font-size:10px;color:#cfcfcf">&gt;</div>
<!-- TRACK BAR -->
<div class="a" style="left:0;top:708px;width:1000px;height:22px;background:#3d3d3d"></div>
<div class="a" style="left:40px;top:719px;width:960px;height:11px;background:#363636"></div>
<div class="a" style="left:0;top:707px;width:1000px;height:2px;background:#262626"></div>
<div class="a" style="left:0;top:708px;width:40px;height:22px;background:#404040"></div>
<svg class="a" style="left:9px;top:711px" width="16" height="16"><rect x="1.5" y="1.5" width="13" height="4" fill="none" stroke="#ddd" stroke-width="1.2"/><path d="M4 3.5 H12" stroke="#aaa"/><path d="M1 12 H15" stroke="#ddd" stroke-width="1.5"/><path d="M5 7 V10 M11 7 V10" stroke="#ccc"/><path d="M3.5 9 L5 7 L6.5 9 M9.5 9 L11 7 L12.5 9" fill="none" stroke="#ccc" stroke-width=".8"/><rect x="1" y="13.5" width="14" height="2" fill="#bbb"/></svg>
<div class="a" style="left:40px;top:710px;width:6px;height:19px;background:#b8a830"></div>
<div class="t" style="left:41px;top:720px;font-size:8px;color:#7a7020">0</div>
<div class="a tk" style="left:50.2px"></div><div class="a tk" style="left:57.9px"></div><div class="a tk" style="left:65.6px"></div><div class="a tk" style="left:73.3px"></div><div class="a tk" style="left:81.0px"></div><div class="a tk" style="left:88.8px"></div><div class="a tk" style="left:96.5px"></div><div class="a tk" style="left:104.2px"></div><div class="a tk" style="left:111.9px"></div><div class="a tk" style="left:119.6px"></div><div class="a tk" style="left:127.3px"></div><div class="a tk" style="left:135.0px"></div><div class="a tk" style="left:142.7px"></div><div class="a tk" style="left:150.4px"></div><div class="a tk" style="left:158.2px"></div><div class="a tk" style="left:165.9px"></div><div class="a tk" style="left:173.6px"></div><div class="a tk" style="left:181.3px"></div><div class="a tk" style="left:189.0px"></div><div class="a tk" style="left:196.7px"></div><div class="a tk" style="left:204.4px"></div><div class="a tk" style="left:212.1px"></div><div class="a tk" style="left:219.8px"></div><div class="a tk" style="left:227.5px"></div><div class="a tk" style="left:235.2px"></div><div class="a tk" style="left:243.0px"></div><div class="a tk" style="left:250.7px"></div><div class="a tk" style="left:258.4px"></div><div class="a tk" style="left:266.1px"></div><div class="a tk" style="left:273.8px"></div><div class="a tk" style="left:281.5px"></div><div class="a tk" style="left:289.2px"></div><div class="a tk" style="left:296.9px"></div><div class="a tk" style="left:304.6px"></div><div class="a tk" style="left:312.4px"></div><div class="a tk" style="left:320.1px"></div><div class="a tk" style="left:327.8px"></div><div class="a tk" style="left:335.5px"></div><div class="a tk" style="left:343.2px"></div><div class="a tk" style="left:350.9px"></div><div class="a tk" style="left:358.6px"></div><div class="a tk" style="left:366.3px"></div><div class="a tk" style="left:374.0px"></div><div class="a tk" style="left:381.7px"></div><div class="a tk" style="left:389.4px"></div><div class="a tk" style="left:397.2px"></div><div class="a tk" style="left:404.9px"></div><div class="a tk" style="left:412.6px"></div><div class="a tk" style="left:420.3px"></div><div class="a tk" style="left:428.0px"></div><div class="a tk" style="left:435.7px"></div><div class="a tk" style="left:443.4px"></div><div class="a tk" style="left:451.1px"></div><div class="a tk" style="left:458.8px"></div><div class="a tk" style="left:466.6px"></div><div class="a tk" style="left:474.3px"></div><div class="a tk" style="left:482.0px"></div><div class="a tk" style="left:489.7px"></div><div class="a tk" style="left:497.4px"></div><div class="a tk" style="left:505.1px"></div><div class="a tk" style="left:512.8px"></div><div class="a tk" style="left:520.5px"></div><div class="a tk" style="left:528.2px"></div><div class="a tk" style="left:535.9px"></div><div class="a tk" style="left:543.6px"></div><div class="a tk" style="left:551.4px"></div><div class="a tk" style="left:559.1px"></div><div class="a tk" style="left:566.8px"></div><div class="a tk" style="left:574.5px"></div><div class="a tk" style="left:582.2px"></div><div class="a tk" style="left:589.9px"></div><div class="a tk" style="left:597.6px"></div><div class="a tk" style="left:605.3px"></div><div class="a tk" style="left:613.0px"></div><div class="a tk" style="left:620.8px"></div><div class="a tk" style="left:628.5px"></div><div class="a tk" style="left:636.2px"></div><div class="a tk" style="left:643.9px"></div><div class="a tk" style="left:651.6px"></div><div class="a tk" style="left:659.3px"></div><div class="a tk" style="left:667.0px"></div><div class="a tk" style="left:674.7px"></div><div class="a tk" style="left:682.4px"></div><div class="a tk" style="left:690.1px"></div><div class="a tk" style="left:697.9px"></div><div class="a tk" style="left:705.6px"></div><div class="a tk" style="left:713.3px"></div><div class="a tk" style="left:721.0px"></div><div class="a tk" style="left:728.7px"></div><div class="a tk" style="left:736.4px"></div><div class="a tk" style="left:744.1px"></div><div class="a tk" style="left:751.8px"></div><div class="a tk" style="left:759.5px"></div><div class="a tk" style="left:767.2px"></div><div class="a tk" style="left:775.0px"></div><div class="a tk" style="left:782.7px"></div><div class="a tk" style="left:790.4px"></div><div class="a tk" style="left:798.1px"></div><div class="a tk" style="left:805.8px"></div><div class="a tk" style="left:813.5px"></div>
<div class="t tl" style="left:79.0px">5</div><div class="t tl" style="left:115.1px">10</div><div class="t tl" style="left:153.7px">15</div><div class="t tl" style="left:192.2px">20</div><div class="t tl" style="left:230.8px">25</div><div class="t tl" style="left:269.3px">30</div><div class="t tl" style="left:307.9px">35</div><div class="t tl" style="left:346.4px">40</div><div class="t tl" style="left:384.9px">45</div><div class="t tl" style="left:423.5px">50</div><div class="t tl" style="left:462.1px">55</div><div class="t tl" style="left:500.6px">60</div><div class="t tl" style="left:539.1px">65</div><div class="t tl" style="left:577.7px">70</div><div class="t tl" style="left:616.2px">75</div><div class="t tl" style="left:654.8px">80</div><div class="t tl" style="left:693.4px">85</div><div class="t tl" style="left:731.9px">90</div><div class="t tl" style="left:770.5px">95</div><div class="t tl" style="left:806.5px">100</div>



<!-- STATUS BAR -->
<div class="a" style="left:0;top:730px;width:1000px;height:37px;background:#444"></div>
<div class="a" style="left:1px;top:731px;width:77px;height:18px;background:#e0cccc;border:1px solid #f2f2f2;border-right-width:2px"></div>
<div class="a" style="left:1px;top:749px;width:77px;height:2px;background:#555"></div>
<div class="a" style="left:1px;top:751px;width:77px;height:16px;background:#fbfbfb"></div>
<div class="t" style="left:5px;top:753px;font-size:9.5px;color:#d82020">一</div><div class="t" style="left:24px;top:753px;font-size:9.5px;color:#d82020">所在行:</div><div class="t" style="left:67px;top:752px;font-size:11px;color:#d82020">&lsaquo;</div>
<div class="a" style="left:78px;top:730px;width:5px;height:37px;background:#363636"></div>
<div class="a" style="left:83px;top:732px;width:241px;height:18px;background:#474747;border-top:1px solid #2a2a2a;border-left:1px solid #303030"></div>
<div class="t sbt" style="left:88px;top:736px">未选定任何对象</div>
<div class="a" style="left:83px;top:751px;width:460px;height:16px;background:#474747;border-top:1px solid #2a2a2a"></div>
<div class="t sbt" style="left:88px;top:755px">单击并拖动以选择并移动对象</div>
<svg class="a" style="left:329px;top:735px" width="11" height="11"><path d="M3 5 V3.5 a2.5 2.5 0 0 1 5 0 V5" fill="none" stroke="#ddd" stroke-width="1.2"/><rect x="2" y="5" width="7" height="5.5" fill="#ddd"/><rect x="5" y="7" width="1" height="2" fill="#555"/></svg>
<svg class="a" style="left:349px;top:733px" width="13" height="13"><rect x="0.5" y="0.5" width="12" height="12" fill="#f4f4f4"/><circle cx="6.5" cy="6.5" r="3.3" fill="none" stroke="#333" stroke-width="1.1"/><path d="M6.5 0.5 V3 M6.5 10 V12.5 M0.5 6.5 H3 M10 6.5 H12.5" stroke="#333" stroke-width="1.1"/></svg>
<div class="t sbt" style="left:368px;top:736px;font-size:9px">X:</div>
<div class="a fld" style="left:377px;top:733px;width:44px;height:16px"></div>
<div class="t sbt" style="left:432px;top:736px;font-size:9px">Y:</div>
<div class="a fld" style="left:441px;top:733px;width:44px;height:16px"></div>
<div class="t sbt" style="left:496px;top:736px;font-size:9px">Z:</div>
<div class="a fld" style="left:505px;top:733px;width:44px;height:16px"></div>
<div class="a" style="left:560px;top:731px;width:79px;height:19px;background:#474747;border-top:1px solid #2a2a2a;border-left:1px solid #2a2a2a"></div>
<div class="t sbt" style="left:565px;top:736px">栅格 = 0.0mm</div>
<div class="a" style="left:542px;top:751px;width:17px;height:16px;background:#2a6acc"></div>
<svg class="a" style="left:544px;top:753px" width="13" height="13"><rect x="3" y="1" width="8" height="8" fill="none" stroke="#fff" stroke-width="1.3"/><rect x="1" y="3" width="8" height="8" fill="#2a6acc" stroke="#fff" stroke-width="1.3"/></svg>
<div class="a" style="left:560px;top:751px;width:79px;height:16px;background:#474747;border-top:1px solid #2a2a2a;border-left:1px solid #2a2a2a"></div>
<div class="t sbt" style="left:565px;top:755px">添加时间标记</div>
<div class="a" style="left:642px;top:731px;width:32px;height:36px;background:#474747;border-top:1px solid #2a2a2a;border-left:1px solid #2a2a2a"></div>
<svg class="a" style="left:648px;top:742px" width="22" height="12"><circle cx="5" cy="5.5" r="3.6" fill="none" stroke="#111" stroke-width="2"/><path d="M8.5 5.5 H21 M14 5.5 V9 M17.5 5.5 V8 M20.5 5.5 V9" stroke="#111" stroke-width="2"/></svg>
<div class="a kb" style="left:675px;top:732px;width:52px;height:17px"></div>
<div class="t sbt" style="left:678px;top:736px">自动关键点</div>
<div class="a kb" style="left:675px;top:751px;width:52px;height:16px"></div>
<div class="t sbt" style="left:678px;top:755px">设置关键点</div>
<div class="a" style="left:728px;top:732px;width:95px;height:17px;background:#1a1a1a"></div>
<div class="a" style="left:729px;top:733px;width:93px;height:15px;background:linear-gradient(#fafafa,#e6e6e6)"></div>
<div class="t" style="left:731px;top:735px;font-size:10px;color:#111">选定对象</div>
<i class="arr a" style="left:812px;top:739px"></i>
<div class="a" style="left:729px;top:751px;width:18px;height:16px;background:#3c3c3c"></div><svg class="a" style="left:730px;top:751px" width="17" height="16"><path d="M2 13 L5.5 4 L9 12 L12 3" fill="none" stroke="#d83848" stroke-width="1.4"/><path d="M1 9 H14" stroke="#6a6a8a" stroke-width=".6"/><circle cx="5.5" cy="4" r=".9" fill="#80a0e0"/><circle cx="9" cy="12" r=".9" fill="#80a0e0"/><path d="M12 15 L15 12" stroke="#ddd" stroke-width="1.3"/></svg>
<div class="a kb" style="left:748px;top:751px;width:75px;height:16px"></div>
<div class="t sbt" style="left:752px;top:755px">关键点过滤器...</div>
<svg class="a" style="left:829px;top:735px" width="14" height="10"><path d="M1 1 V9" stroke="#ddd" stroke-width="1.2"/><path d="M7 1 L2.5 5 L7 9Z M12 1 L7.5 5 L12 9Z" fill="none" stroke="#ddd" stroke-width="1"/></svg>
<svg class="a" style="left:829px;top:753px" width="14" height="10"><path d="M1 1 V9 M13 1 V9" stroke="#ddd" stroke-width="1.2"/><path d="M6.5 1 L2.5 5 L6.5 9Z M7.5 1 L11.5 5 L7.5 9Z" fill="#ddd"/></svg>
<div class="a" style="left:846px;top:751px;width:56px;height:16px;background:#555;border-top:2px solid #1a1a1a;border-left:1px solid #1a1a1a"></div>
<div class="t" style="left:850px;top:754px;font-size:10px;color:#ccc">0</div>
<div class="a" style="left:901px;top:751px;width:8px;height:16px;background:#3a3a3a"></div>
<i class="arr a" style="left:902px;top:759px;border-top-color:#ccc;border-left-width:2.5px;border-right-width:2.5px;border-top-width:3px"></i>
<svg class="a" style="left:911px;top:753px" width="15" height="12"><rect x="1" y="3" width="8" height="7" fill="#6a9ad0"/><rect x="2" y="4" width="6" height="5" fill="#e0e8f0"/><circle cx="10.5" cy="7" r="3.8" fill="#e0e8f0" stroke="#444" stroke-width=".7"/><path d="M10.5 5 V7 H12" stroke="#333" stroke-width=".7" fill="none"/></svg>
<svg class="a" style="left:934px;top:754px" width="14" height="10"><path d="M1 4.5 H6 M2.5 3 L1 4.5 L2.5 6" stroke="#ddd" fill="none"/><rect x="8.5" y="2" width="5" height="5" fill="#ddd"/></svg>
<svg class="a" style="left:954px;top:751px" width="13" height="15"><path d="M3 14 C1 11 0 8 1 7 C2 6 3 8 3.5 9 V3 C3.5 1.5 5 1.5 5 3 V7 V2 C5 0.5 7 0.5 7 2 V7 V2.5 C7 1 9 1 9 2.5 V7 V4 C9 3 11 3 11 4 V10 C11 12 10 14 9 14Z" fill="#f0f0f0" stroke="#666" stroke-width=".5"/></svg>
<svg class="a" style="left:964px;top:750px" width="16" height="16"><path d="M4 12 A5 5 0 0 1 8 3" fill="none" stroke="#e8e8e8" stroke-width="1.3"/><path d="M6 12 L12 12 L9 6.5Z" fill="#6ab060"/><circle cx="8.5" cy="3" r="1.5" fill="#ddd"/><path d="M12 15.5 L15 12.5 M1 15.5 L3.5 13" stroke="#ddd" stroke-width="1.2"/></svg>
<svg class="a" style="left:983px;top:750px" width="17" height="17"><rect x="1" y="1" width="11" height="11" fill="#e8e8e8"/><path d="M3.5 3.5 L9 9 M3.5 3.5 V7 M3.5 3.5 H7" stroke="#222" stroke-width="1.5" fill="none"/><path d="M12 5 V13 H4" fill="none" stroke="#888" stroke-width="1"/><path d="M13 16 L16 13" stroke="#ddd" stroke-width="1.2"/></svg>
<svg class="a" style="left:982px;top:732px" width="18" height="17"><rect x="7" y="1" width="5" height="5" fill="#ddd"/><rect x="12.5" y="1" width="4.5" height="5" fill="#ddd"/><rect x="5" y="7" width="7" height="6" fill="#5a9a50"/><rect x="12.5" y="6.5" width="4.5" height="4.5" fill="#ddd"/><path d="M1 16 L4 13 M13.5 16 L16.5 13" stroke="#ddd" stroke-width="1.3"/></svg>
<!-- PRIVACY BLOB -->
<div class="t" style="left:771px;top:724px;font-size:22px;color:#f0f0f0;letter-spacing:-.2px">jingyan.b</div>
<svg class="a" style="left:750px;top:640px" width="250" height="127"><g fill="#4b4b4b"><path d="M25 34 H221 Q236 34 236 49 V80 H25 A23 23 0 0 1 25 34Z"/><circle cx="114" cy="27" r="23"/><path d="M108 40 H236 V85 Q236 110 210 112 L145 112 Q108 112 108 80Z"/></g><rect x="236" y="45" width="14" height="43" fill="#474747"/><rect x="236" y="45" width="1" height="43" fill="#444"/><rect x="245" y="0" width="2" height="88" fill="#393939"/><rect x="236" y="87" width="14" height="1.5" fill="#2e2e2e"/></svg>
</body></html>
